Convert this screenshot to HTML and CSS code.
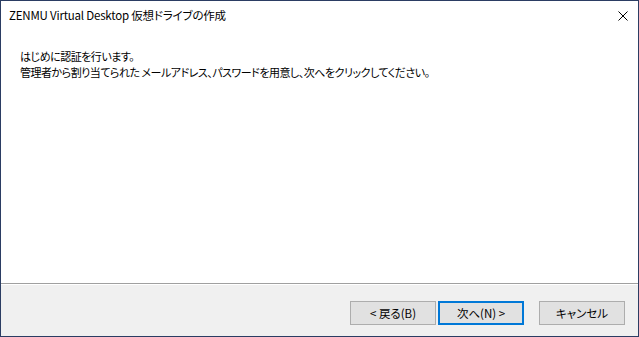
FILE: index.html
```html
<!DOCTYPE html>
<html lang="ja">
<head>
<meta charset="utf-8">
<title>ZENMU Virtual Desktop 仮想ドライブの作成</title>
<link rel="stylesheet" href="styles.css">
</head>
<body>
<div class="window">
  <div class="titlebar">
    <span class="title">ZENMU Virtual Desktop 仮想ドライブの作成</span>
    <span class="close" aria-label="閉じる">
      <svg width="10" height="10" viewBox="0 0 10 10"><path d="M0.5 0.5 L9.5 9.5 M9.5 0.5 L0.5 9.5" stroke="#000" stroke-width="1" fill="none"/></svg>
    </span>
  </div>
  <div class="content">
    <p class="msg">はじめに認証を行います。<br>管理者から割り当てられた メールアドレス、パスワードを用意し、次へをクリックしてください。</p>
  </div>
  <div class="footer">
    <div class="pair">
      <button class="btn">&lt; 戻る(B)</button>
      <button class="btn default">次へ(N) &gt;</button>
    </div>
    <button class="btn">キャンセル</button>
  </div>
</div>
</body>
</html>
```

FILE: styles.css
```css
html, body {
  margin: 0;
  padding: 0;
  background: #2b3d63;
}
body {
  font-family: "Noto Sans CJK JP", "Noto Sans", sans-serif;
  font-size: 12px;
  color: #000;
}
.window {
  width: 639px;
  height: 337px;
  box-sizing: border-box;
  border: 1px solid #2b3d63;
  background: #fff;
  display: flex;
  flex-direction: column;
}
.titlebar {
  height: 29px;
  display: flex;
  align-items: center;
  justify-content: space-between;
  padding-left: 8px;
  padding-right: 10px;
}
.title {
  font-size: 11.5px;
  letter-spacing: -0.2px;
  line-height: 29px;
  font-feature-settings: "palt";
}
.close {
  display: flex;
  width: 10px;
  height: 10px;
}
.content {
  flex: 1;
  padding: 18px 0 0 19px;
}
.msg {
  margin: 0;
  font-size: 11px;
  letter-spacing: -0.5px;
  line-height: 16px;
  font-feature-settings: "palt";
}
.footer {
  height: 53px;
  box-sizing: border-box;
  border-top: 1px solid #a0a0a0;
  box-shadow: inset 0 1px 0 #fff;
  background: #f0f0f0;
  display: flex;
  justify-content: flex-end;
  align-items: flex-start;
  padding: 17px 13px 0 0;
  gap: 15px;
}
.pair {
  display: flex;
  gap: 2px;
}
.btn {
  width: 86px;
  height: 24px;
  box-sizing: border-box;
  border: 1px solid #adadad;
  background: #e1e1e1;
  font-family: "Noto Sans CJK JP", "Noto Sans", sans-serif;
  font-size: 11.5px;
  color: #000;
  padding: 0;
  margin: 0;
  line-height: 20px;
  font-feature-settings: "palt";
}
.btn.default {
  border: 2px solid #0078d7;
}
```
